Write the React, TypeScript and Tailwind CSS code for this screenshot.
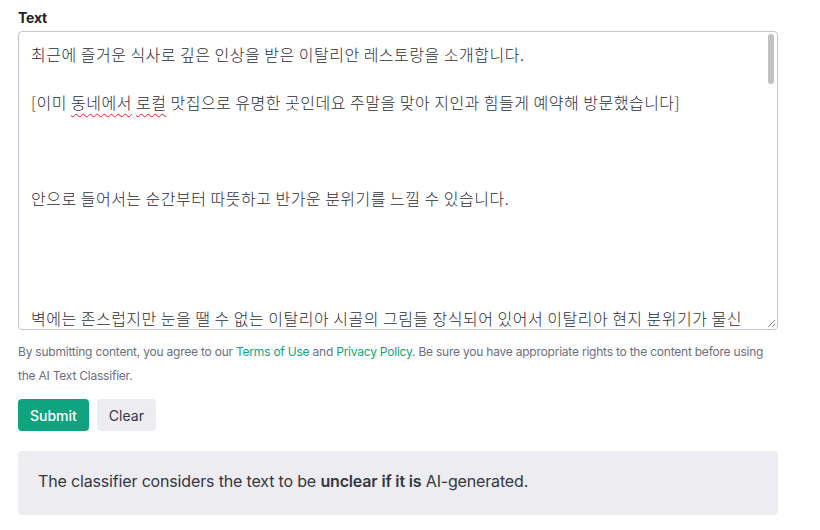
import React from "react";

const lines: string[] = [
  "최근에 즐거운 식사로 깊은 인상을 받은 이탈리안 레스토랑을 소개합니다.",
  "",
  "[이미 동네에서 로컬 맛집으로 유명한 곳인데요 주말을 맞아 지인과 힘들게 예약해 방문했습니다]",
  "",
  "",
  "",
  "안으로 들어서는 순간부터 따뜻하고 반가운 분위기를 느낄 수 있습니다.",
  "",
  "",
  "",
  "",
  "벽에는 존스럽지만 눈을 땔 수 없는 이탈리아 시골의 그림들 장식되어 있어서 이탈리아 현지 분위기가 물신",
];

const Squiggle = ({ children }: { children: React.ReactNode }) => (
  <span className="underline decoration-wavy decoration-[#e11d1d] decoration-1 underline-offset-[4px]">
    {children}
  </span>
);

export default function App() {
  return (
    <div
      className="w-[820px] h-[530px] bg-white px-[18px] pt-[7px]"
      style={{ fontFamily: "Inter, 'Noto Sans', sans-serif" }}
    >
      <div className="w-[760px]">
        <div className="text-[14px] font-bold text-[#202123] leading-[22px] tracking-[-0.2px]">Text</div>
        <div className="relative mt-[2px] h-[299px] rounded-[4px] border border-[#c5c5d2] overflow-hidden">
          <div
            className="pl-[12px] pr-[24px] pt-[10px] text-[16px] leading-[24px] tracking-[0.5px] font-light text-[#2d2e36]"
            style={{ fontFamily: "'Noto Sans CJK KR', 'Noto Sans', sans-serif" }}
          >
            {lines.map((l, i) => {
              if (i === 2) {
                return (
                  <div key={i} className="h-[24px] whitespace-nowrap">
                    [이미 <Squiggle>동네에서</Squiggle> <Squiggle>로컬</Squiggle> 맛집으로 유명한 곳인데요 주말을 맞아 지인과 힘들게 예약해 방문했습니다]
                  </div>
                );
              }
              if (i === 11) {
                return (
                  <div key={i} className="h-[24px] whitespace-nowrap">
                    벽에는 존스럽지만 눈을 땔 수 없는 이탈리아 시골의 그림들 장식되어 있어서 이탈리아 현지 분위기가 <Squiggle>물신</Squiggle>
                  </div>
                );
              }
              return (
                <div key={i} className="h-[24px] whitespace-nowrap">
                  {l}
                </div>
              );
            })}
          </div>
          <div className="absolute right-[3px] top-[2px] w-[6px] h-[50px] rounded-full bg-[#c1c1c1]" />
          <svg className="absolute right-[1px] bottom-[1px]" width="10" height="10" viewBox="0 0 10 10">
            <line x1="9" y1="2" x2="2" y2="9" stroke="#888" strokeWidth="1" />
            <line x1="9" y1="6" x2="6" y2="9" stroke="#888" strokeWidth="1" />
          </svg>
        </div>
        <p className="mt-[10px] text-[12px] leading-[24px] tracking-[-0.22px] text-[#6e6e80]">
          By submitting content, you agree to our{" "}
          <span className="text-[#10a37f]">Terms of Use</span> and{" "}
          <span className="text-[#10a37f]">Privacy Policy</span>. Be sure you have appropriate rights to the content before using the AI Text Classifier.
        </p>
        <div className="mt-[11px] flex gap-[8px]">
          <button className="h-[32px] px-[12px] rounded-[4px] bg-[#10a37f] text-white text-[14px] font-medium">
            Submit
          </button>
          <button className="h-[32px] px-[12px] rounded-[4px] bg-[#ececf1] text-[#353740] text-[14px]">
            Clear
          </button>
        </div>
        <div className="mt-[20px] h-[64px] rounded-[4px] bg-[#ececf1] px-[20px] pb-[4px] flex items-center text-[16px] tracking-[-0.16px] text-[#353740]">
          <span>
            The classifier considers the text to be <b className="font-semibold">unclear if it is</b> AI-generated.
          </span>
        </div>
      </div>
    </div>
  );
}
